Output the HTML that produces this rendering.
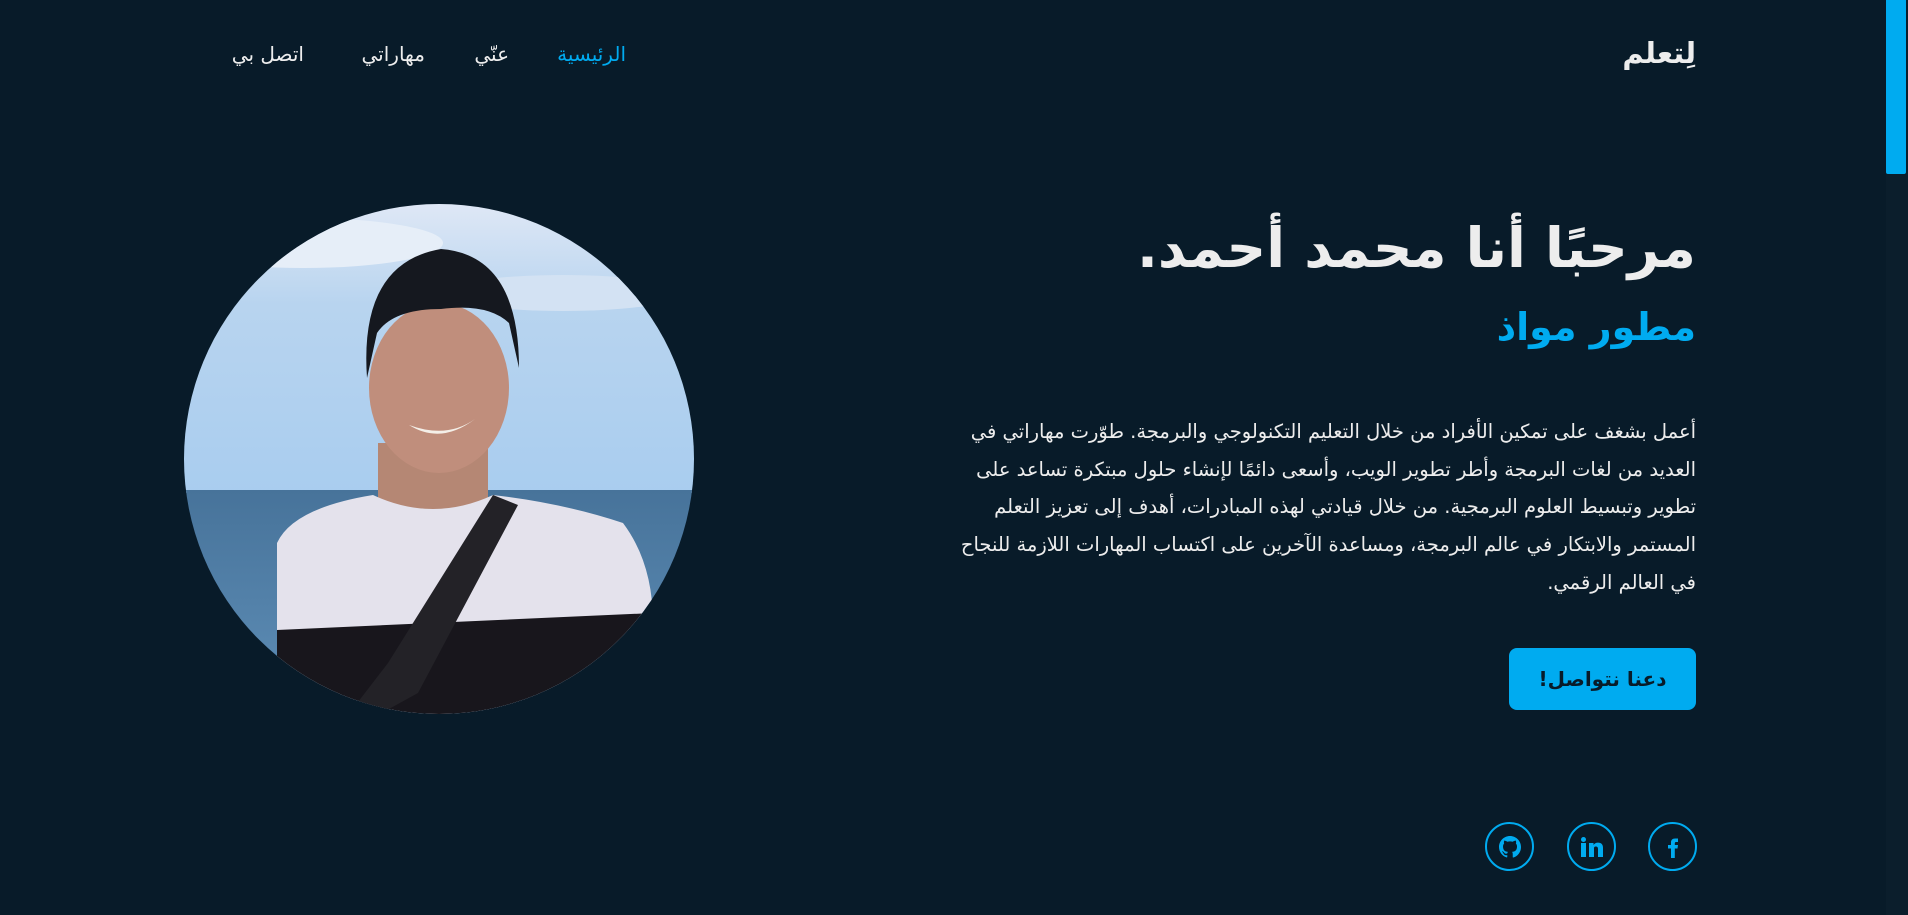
<!DOCTYPE html>
<html lang="ar" dir="rtl">
<head>
<meta charset="utf-8">
<style>
*{margin:0;padding:0;box-sizing:border-box}
html,body{width:1908px;height:915px;overflow:hidden;background:#081b29}
body{position:relative;font-family:"DejaVu Sans","Noto Sans CJK SC",sans-serif;color:#ededed}
.a{position:absolute;white-space:nowrap}
.logo{right:212px;top:36px;font-size:29px;font-weight:bold;color:#ededed;letter-spacing:-1px}
.nav{top:42px;font-size:20px;letter-spacing:-0.5px}
h1{position:absolute;right:212px;top:216px;font-size:55px;font-weight:bold;color:#ededed;white-space:nowrap;letter-spacing:-2px}
h2{position:absolute;right:212px;top:305px;font-size:38px;font-weight:bold;color:#00abf0;white-space:nowrap;letter-spacing:-1px}
p{position:absolute;right:212px;top:413px;width:760px;font-size:19.5px;line-height:37.7px;color:#ededed;letter-spacing:-0.3px}
.btn{position:absolute;left:1509px;top:648px;width:187px;height:62px;background:#00abf0;border-radius:8px;color:#081b29;font-size:20px;font-weight:bold;display:flex;align-items:center;justify-content:center;letter-spacing:-1px}
.soc{position:absolute;top:822px;width:49px;height:49px;border:2px solid #00abf0;border-radius:50%;display:flex;align-items:center;justify-content:center;color:#00abf0}
.sb{position:absolute;left:1886px;top:0;width:22px;height:915px;background:#0b1e2c}
.th{position:absolute;left:1886px;top:0;width:20px;height:174px;background:#00abf0;border-radius:0 0 2px 2px}
</style>
</head>
<body>
<div class="a logo">لِتعلم</div>
<div class="a nav" style="left:557px;width:69px;color:#00abf0">الرئيسية</div>
<div class="a nav" style="left:472px;width:37px">عنّي</div>
<div class="a nav" style="left:353px;width:72px">مهاراتي</div>
<div class="a nav" style="left:226px;width:78px">اتصل بي</div>

<svg class="a" style="left:183px;top:203px" width="512" height="512" viewBox="0 0 512 512">
<defs>
<clipPath id="c"><circle cx="256" cy="256" r="255"/></clipPath>
<linearGradient id="sky" x1="0" y1="0" x2="0" y2="1">
<stop offset="0" stop-color="#dfe8f6"/><stop offset="0.35" stop-color="#b8d4ef"/><stop offset="1" stop-color="#a9cdef"/></linearGradient>
<linearGradient id="sea" x1="0" y1="0" x2="0" y2="1">
<stop offset="0" stop-color="#47739a"/><stop offset="1" stop-color="#5f8fb8"/></linearGradient>
</defs>
<g clip-path="url(#c)">
<rect width="512" height="290" fill="url(#sky)"/>
<ellipse cx="120" cy="40" rx="140" ry="25" fill="#e6eef8"/>
<ellipse cx="380" cy="90" rx="120" ry="18" fill="#d3e2f3"/>
<rect y="287" width="512" height="225" fill="url(#sea)"/>
<rect x="195" y="240" width="110" height="70" fill="#b58774"/>
<path d="M94 340 Q110 305 190 292 Q250 320 310 292 Q380 300 440 320 Q470 360 470 420 L470 512 L94 512 Z" fill="#e4e2ec"/>
<path d="M94 427 L470 410 L470 512 L94 512 Z" fill="#18161c"/>
<path d="M310 292 L335 302 L235 490 L195 512 L165 512 L205 460 Z" fill="#232227"/>
<ellipse cx="256" cy="185" rx="70" ry="85" fill="#c08e7c"/>
<path d="M184 175 Q176 60 258 46 Q336 52 336 165 L326 120 Q305 100 258 106 Q210 106 194 130 Z" fill="#15181f"/>
<path d="M226 222 Q258 242 292 216 Q264 236 226 222 Z" fill="#f4efe8"/>
</g>
</svg>

<h1>مرحبًا أنا محمد أحمد.</h1>
<h2>مطور مواذ</h2>
<p>أعمل بشغف على تمكين الأفراد من خلال التعليم التكنولوجي والبرمجة. طوّرت مهاراتي في العديد من لغات البرمجة وأطر تطوير الويب، وأسعى دائمًا لإنشاء حلول مبتكرة تساعد على تطوير وتبسيط العلوم البرمجية. من خلال قيادتي لهذه المبادرات، أهدف إلى تعزيز التعلم المستمر والابتكار في عالم البرمجة، ومساعدة الآخرين على اكتساب المهارات اللازمة للنجاح في العالم الرقمي.</p>
<div class="btn">دعنا نتواصل!</div>

<div class="soc" style="left:1648px"><svg width="22" height="22" viewBox="0 0 22 22"><path d="M9 22V12.5H6V9H9V6.5Q9 2.5 13 2.5H16V6H14Q12.8 6 12.8 7.2V9H16L15.5 12.5H12.8V22Z" fill="#00abf0"/></svg></div>
<div class="soc" style="left:1567px"><svg width="22" height="20" viewBox="0 0 22 20"><rect x="0" y="6" width="5" height="14" fill="#00abf0"/><circle cx="2.5" cy="2.5" r="2.5" fill="#00abf0"/><path d="M8 6h4.5v2Q14 5.6 17 5.6 22 5.6 22 11v9h-5v-8q0-2.5-2.2-2.5T13 12v8H8Z" fill="#00abf0"/></svg></div>
<div class="soc" style="left:1485px"><svg width="22" height="22" viewBox="0 0 16 16"><path fill="#00abf0" d="M8 0C3.58 0 0 3.58 0 8c0 3.540 2.29 6.53 5.47 7.59.4.07.55-.17.55-.38v-1.33c-2.23.48-2.7-1.07-2.7-1.070-.36-.92-.89-1.17-.89-1.17-.73-.5.05-.49.05-.49.8.06 1.23.83 1.23.83.72 1.23 1.88.87 2.34.67.07-.52.28-.87.51-1.07-1.78-.2-3.64-.89-3.64-3.95 0-.87.31-1.59.82-2.15-.08-.2-.36-1.02.08-2.12 0 0 .67-.21 2.2.82A7.6 7.6 0 0 1 8 3.9c.68 0 1.36.09 2 .27 1.53-1.04 2.2-.82 2.2-.82.44 1.1.16 1.92.08 2.12.51.56.82 1.27.82 2.15 0 3.07-1.87 3.75-3.65 3.95.29.25.54.73.54 1.48v2.2c0 .21.15.46.55.38A8.01 8.01 0 0 0 16 8c0-4.42-3.58-8-8-8z"/></svg></div>

<div class="sb"></div>
<div class="th"></div>
</body>
</html>
